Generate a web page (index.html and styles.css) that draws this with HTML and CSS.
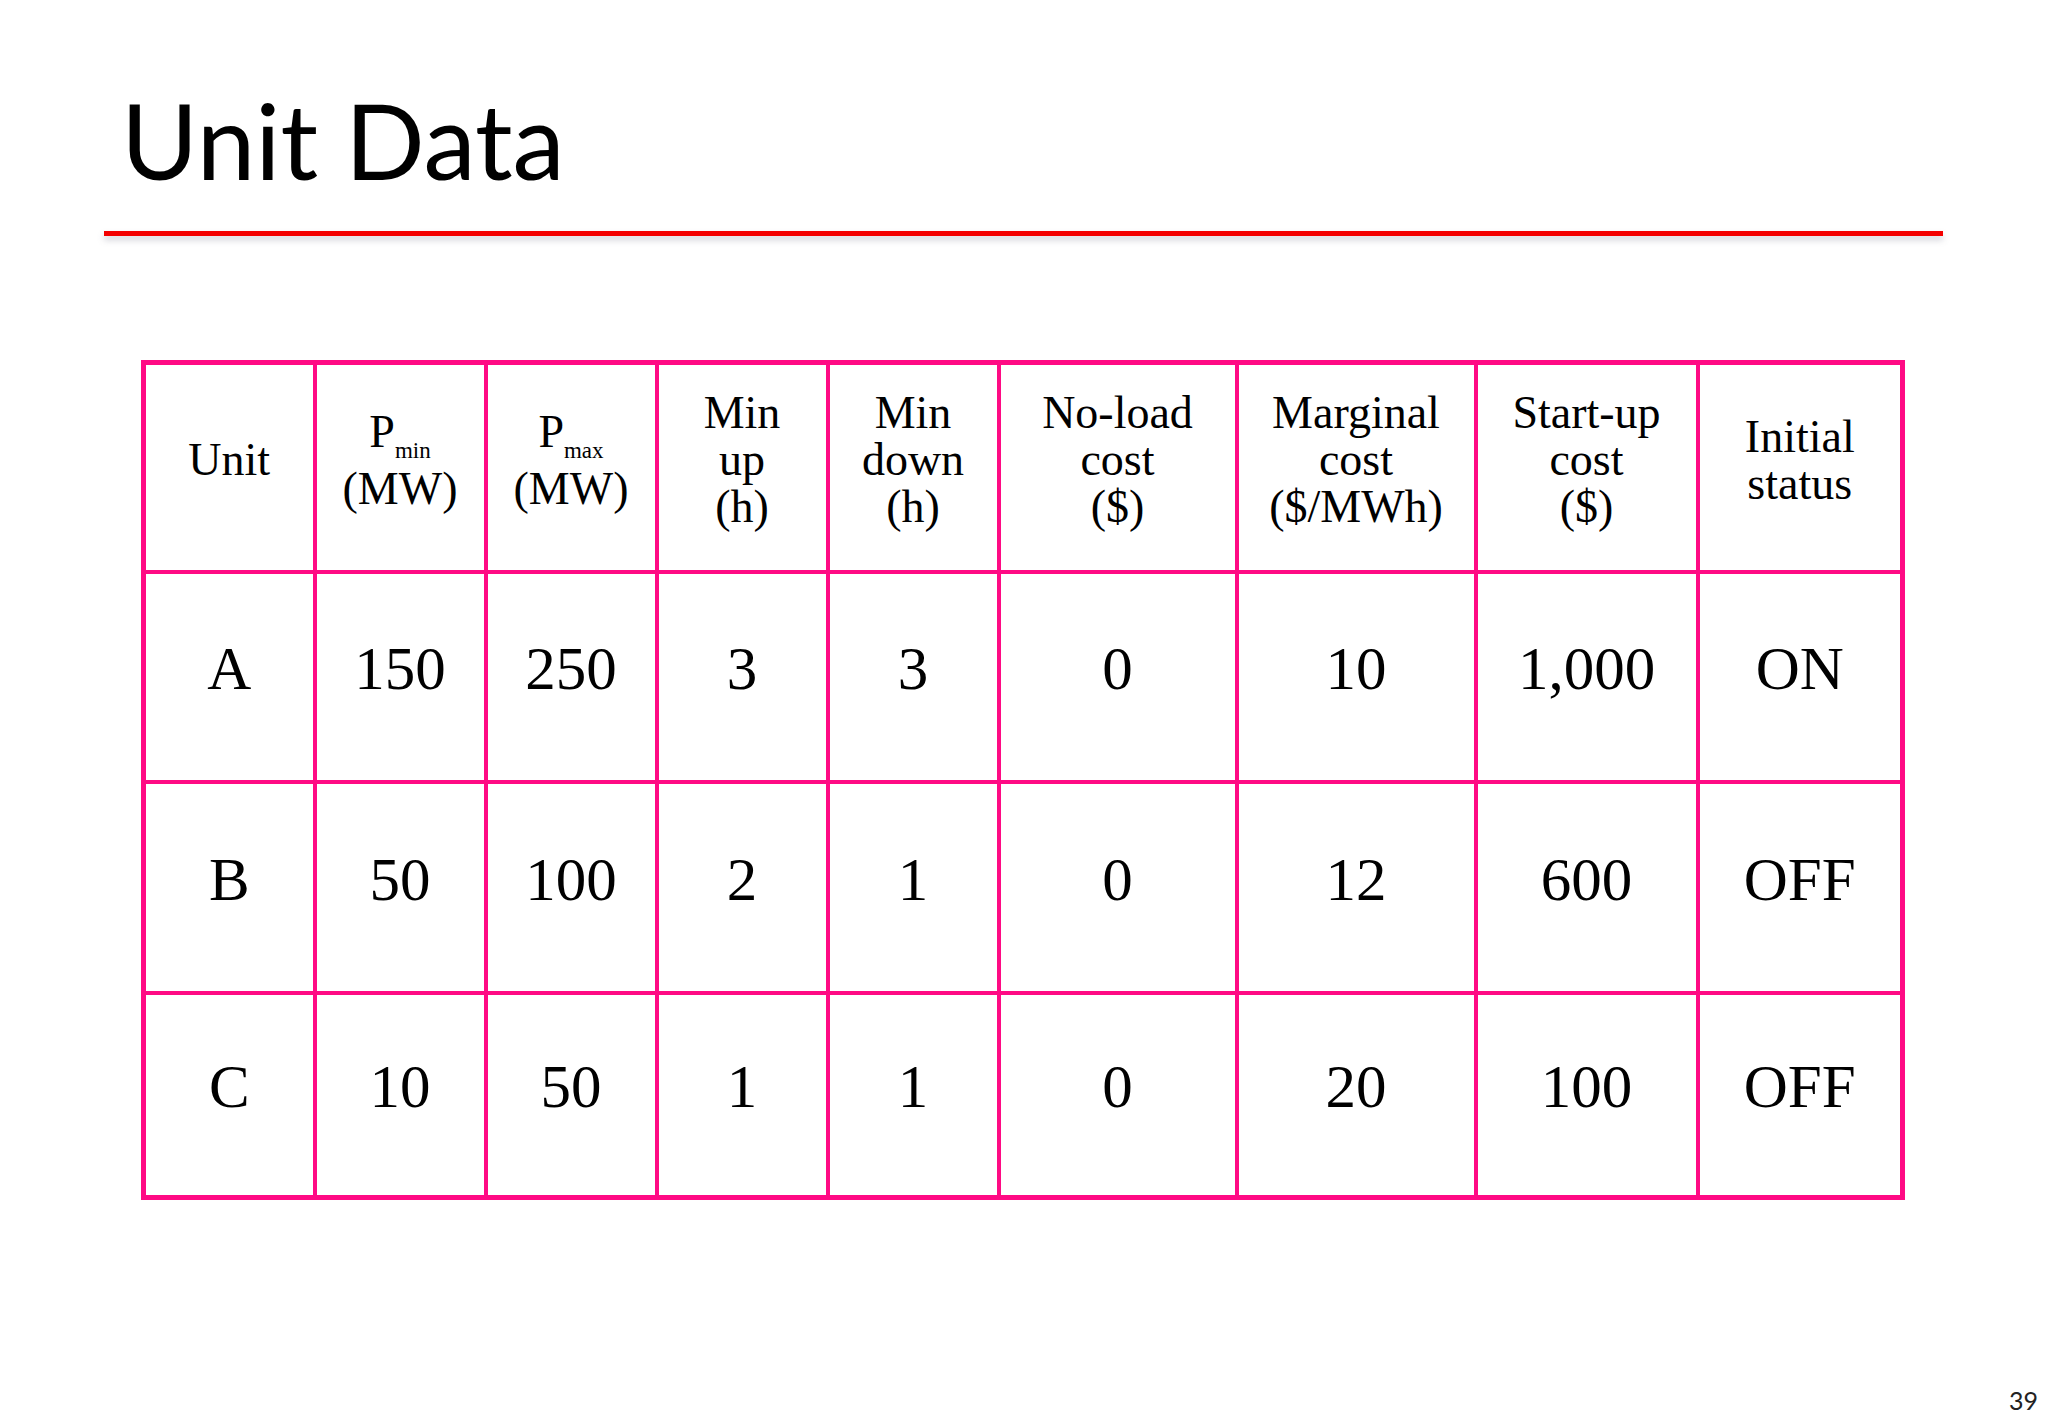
FILE: index.html
```html
<!DOCTYPE html>
<html lang="en">
<head>
<meta charset="utf-8">
<title>Unit Data</title>
<link rel="stylesheet" href="styles.css">
</head>
<body>
<div class="slide">
  <header class="slide-head">
    <h1 class="title">Unit Data</h1>
    <div class="rule"></div>
  </header>
  <main class="content">
    <table class="units">
      <colgroup>
        <col class="c-narrow"><col class="c-narrow"><col class="c-narrow"><col class="c-narrow"><col class="c-narrow">
        <col class="c-wide"><col class="c-wide2"><col class="c-mid"><col class="c-last">
      </colgroup>
      <thead>
        <tr class="r-head">
          <th>Unit</th>
          <th class="p-head">P<sub>min</sub><br>(MW)</th>
          <th class="p-head">P<sub>max</sub><br>(MW)</th>
          <th>Min<br>up<br>(h)</th>
          <th>Min<br>down<br>(h)</th>
          <th>No-load<br>cost<br>($)</th>
          <th>Marginal<br>cost<br>($/MWh)</th>
          <th>Start-up<br>cost<br>($)</th>
          <th>Initial<br>status</th>
        </tr>
      </thead>
      <tbody>
        <tr class="r1"><td>A</td><td>150</td><td>250</td><td>3</td><td>3</td><td>0</td><td>10</td><td>1,000</td><td>ON</td></tr>
        <tr class="r2"><td>B</td><td>50</td><td>100</td><td>2</td><td>1</td><td>0</td><td>12</td><td>600</td><td>OFF</td></tr>
        <tr class="r3"><td>C</td><td>10</td><td>50</td><td>1</td><td>1</td><td>0</td><td>20</td><td>100</td><td>OFF</td></tr>
      </tbody>
    </table>
  </main>
  <footer class="page-num">39</footer>
</div>
</body>
</html>
```

FILE: styles.css
```css
html, body {
  margin: 0;
  padding: 0;
  background: #ffffff;
}

.slide {
  position: relative;
  width: 2048px;
  height: 1418px;
  background: #ffffff;
  overflow: hidden;
}

.slide-head {
  padding-top: 76px;
}

.title {
  margin: 0 0 0 121px;
  font-family: Lato, "Open Sans", sans-serif;
  font-weight: 400;
  font-size: 105px;
  line-height: 126px;
  color: #000000;
}

.rule {
  margin: 29px 0 0 104px;
  width: 1839px;
  height: 5px;
  background: #f40000;
  box-shadow: 0 4px 6px rgba(120, 120, 140, 0.35);
}

.content {
  padding: 124px 0 0 141px;
}

.units {
  border-collapse: collapse;
  table-layout: fixed;
  width: 1764px;
  border: 5px solid #ff0a84;
  font-family: "Liberation Serif", "Times New Roman", serif;
  color: #000000;
}

.c-narrow { width: 171px; }
.c-wide { width: 238px; }
.c-wide2 { width: 239px; }
.c-mid { width: 222px; }
.c-last { width: 205px; }

.units th,
.units td {
  border: 4px solid #ff0a84;
  padding: 0 0 15px 0;
  text-align: center;
  vertical-align: middle;
}

.units th {
  font-weight: 400;
  font-size: 46px;
  line-height: 47px;
}

.units th.p-head {
  line-height: 57px;
}

.units sub {
  font-size: 23px;
  line-height: 0;
  vertical-align: -11px;
}

.units td {
  font-size: 61px;
  line-height: 70px;
}

.r-head { height: 209px; }
.r1 { height: 210px; }
.r2 { height: 211px; }
.r3 { height: 205px; }

.page-num {
  position: absolute;
  right: 10px;
  bottom: 3px;
  font-family: Lato, "Open Sans", sans-serif;
  font-size: 25px;
  line-height: 30px;
  color: #222222;
}
```
